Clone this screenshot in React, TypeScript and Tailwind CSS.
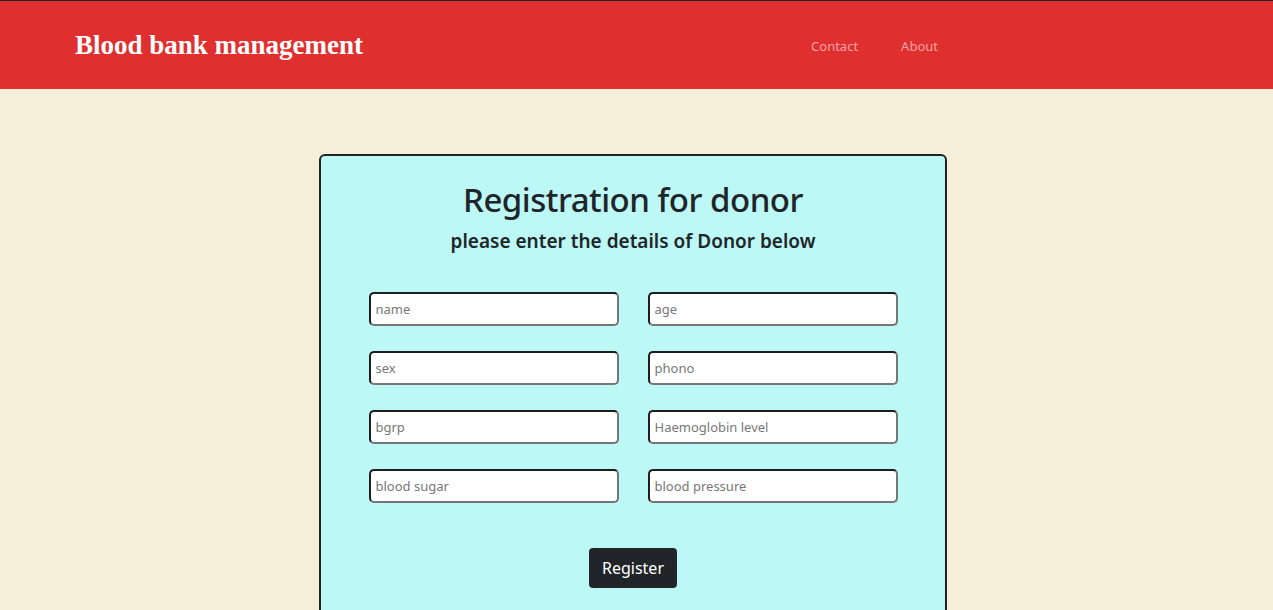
import React from "react";

const fields: string[][] = [
  ["name", "age"],
  ["sex", "phono"],
  ["bgrp", "Haemoglobin level"],
  ["blood sugar", "blood pressure"],
];

const App = () => {
  return (
    <div className="min-h-[610px] bg-[#f5eed8] font-['Noto_Sans',sans-serif] text-[#212529]">
      <nav className="h-[89px] bg-[#e02f2f] border-t border-[#222] flex items-center pt-[3px]">
        <h1 className="ml-[75px] text-[27px] font-bold text-white font-['Liberation_Serif',serif] leading-none pb-[2px]">
          Blood bank management
        </h1>
        <div className="ml-[448px] flex gap-[43px] text-[13px] text-[#f2a4a4]">
          <a href="#">Contact</a>
          <a href="#">About</a>
        </div>
      </nav>

      <div className="pt-[65px]">
        <div className="ml-[319px] w-[628px] h-[470px] bg-[#bcf8f5] border-2 border-[#222] rounded-[6px] flex flex-col items-center">
          <h2 className="mt-[20px] text-[33px] leading-[48px] font-medium tracking-[-0.5px]">
            Registration for donor
          </h2>
          <h3 className="mt-[3px] text-[19px] leading-[28px] font-semibold">
            please enter the details of Donor below
          </h3>

          <form className="mt-[37px] grid grid-cols-2 gap-x-[29px] gap-y-[25px]">
            {fields.flat().map((f, i) => (
              <input
                key={i}
                type="text"
                placeholder={f}
                className="w-[250px] h-[34px] bg-white rounded-[5px] border-2 border-t-[#1e1e1e] border-l-[#1e1e1e] border-b-[#767676] border-r-[#767676] px-[5px] text-[13px] placeholder:text-[#777] outline-none"
              />
            ))}
          </form>

          <button className="mt-[45px] w-[88px] h-[40px] bg-[#212529] text-white rounded-[4px] text-[16px]">
            Register
          </button>
        </div>
      </div>
    </div>
  );
};

export default App;
